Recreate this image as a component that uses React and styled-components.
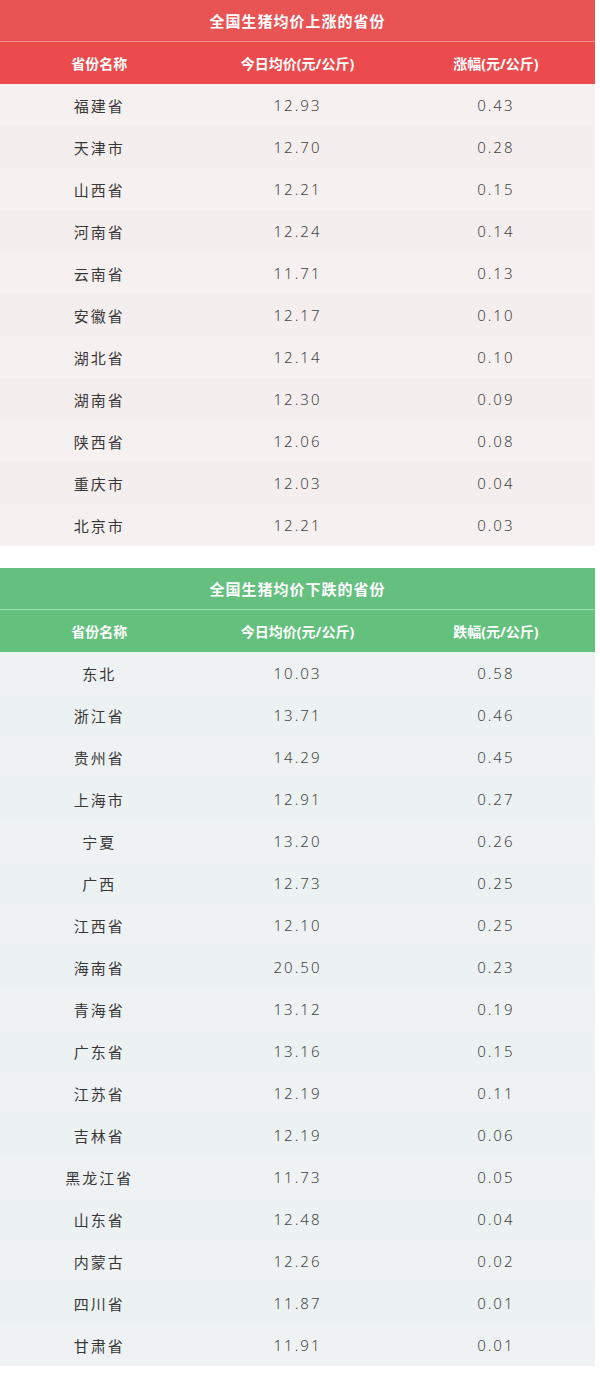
import styled, { createGlobalStyle } from "styled-components";

const rising = [
  ["福建省", "12.93", "0.43"],
  ["天津市", "12.70", "0.28"],
  ["山西省", "12.21", "0.15"],
  ["河南省", "12.24", "0.14"],
  ["云南省", "11.71", "0.13"],
  ["安徽省", "12.17", "0.10"],
  ["湖北省", "12.14", "0.10"],
  ["湖南省", "12.30", "0.09"],
  ["陕西省", "12.06", "0.08"],
  ["重庆市", "12.03", "0.04"],
  ["北京市", "12.21", "0.03"],
];

const falling = [
  ["东北", "10.03", "0.58"],
  ["浙江省", "13.71", "0.46"],
  ["贵州省", "14.29", "0.45"],
  ["上海市", "12.91", "0.27"],
  ["宁夏", "13.20", "0.26"],
  ["广西", "12.73", "0.25"],
  ["江西省", "12.10", "0.25"],
  ["海南省", "20.50", "0.23"],
  ["青海省", "13.12", "0.19"],
  ["广东省", "13.16", "0.15"],
  ["江苏省", "12.19", "0.11"],
  ["吉林省", "12.19", "0.06"],
  ["黑龙江省", "11.73", "0.05"],
  ["山东省", "12.48", "0.04"],
  ["内蒙古", "12.26", "0.02"],
  ["四川省", "11.87", "0.01"],
  ["甘肃省", "11.91", "0.01"],
];

const themes = {
  up: { title: "#e85353", head: "#eb4b4d", line: "#f39090", body: "#f6f0f0", alt: "#f4eeee" },
  down: { title: "#65c07f", head: "#64c17d", line: "#9fdcb0", body: "#eef2f3", alt: "#ecf1f2" },
};

const GlobalStyle = createGlobalStyle`
  body {
    margin: 0;
    background: #ffffff;
    font-family: "Noto Sans", "Noto Sans CJK SC", sans-serif;
  }
`;

const Page = styled.div`
  width: 595px;
  display: flex;
  flex-direction: column;
  gap: 22px;
  padding-bottom: 8px;
`;

const Table = styled.section`
  display: flex;
  flex-direction: column;
`;

const Title = styled.div`
  height: 41px;
  display: flex;
  align-items: center;
  justify-content: center;
  background: ${(p) => themes[p.$tone].title};
  border-bottom: 1px solid ${(p) => themes[p.$tone].line};
  color: #fff;
  font-size: 15px;
  font-weight: 700;
  letter-spacing: 1px;
`;

const Row = styled.div`
  height: 42px;
  display: grid;
  grid-template-columns: repeat(3, 1fr);
  align-items: center;
  background: ${(p) => (p.$head ? themes[p.$tone].head : p.$odd ? themes[p.$tone].alt : themes[p.$tone].body)};
  color: ${(p) => (p.$head ? "#fff" : "#3a3a3a")};
`;

const HeadCell = styled.div`
  text-align: center;
  font-size: 14px;
  font-weight: 700;
`;

const Name = styled.div`
  text-align: center;
  font-size: 15px;
  letter-spacing: 2px;
  color: #383838;
`;

const Num = styled.div`
  text-align: center;
  font-size: 15px;
  font-weight: 300;
  letter-spacing: 2px;
  color: #444;
`;

function PriceTable({ tone, title, change, rows }) {
  return (
    <Table>
      <Title $tone={tone}>{title}</Title>
      <Row $tone={tone} $head>
        <HeadCell>省份名称</HeadCell>
        <HeadCell>今日均价(元/公斤)</HeadCell>
        <HeadCell>{change}(元/公斤)</HeadCell>
      </Row>
      {rows.map(([name, price, diff], i) => (
        <Row key={name} $tone={tone} $odd={i % 2 === 1}>
          <Name>{name}</Name>
          <Num>{price}</Num>
          <Num>{diff}</Num>
        </Row>
      ))}
    </Table>
  );
}

export default function App() {
  return (
    <>
      <GlobalStyle />
      <Page>
        <PriceTable tone="up" title="全国生猪均价上涨的省份" change="涨幅" rows={rising} />
        <PriceTable tone="down" title="全国生猪均价下跌的省份" change="跌幅" rows={falling} />
      </Page>
    </>
  );
}
